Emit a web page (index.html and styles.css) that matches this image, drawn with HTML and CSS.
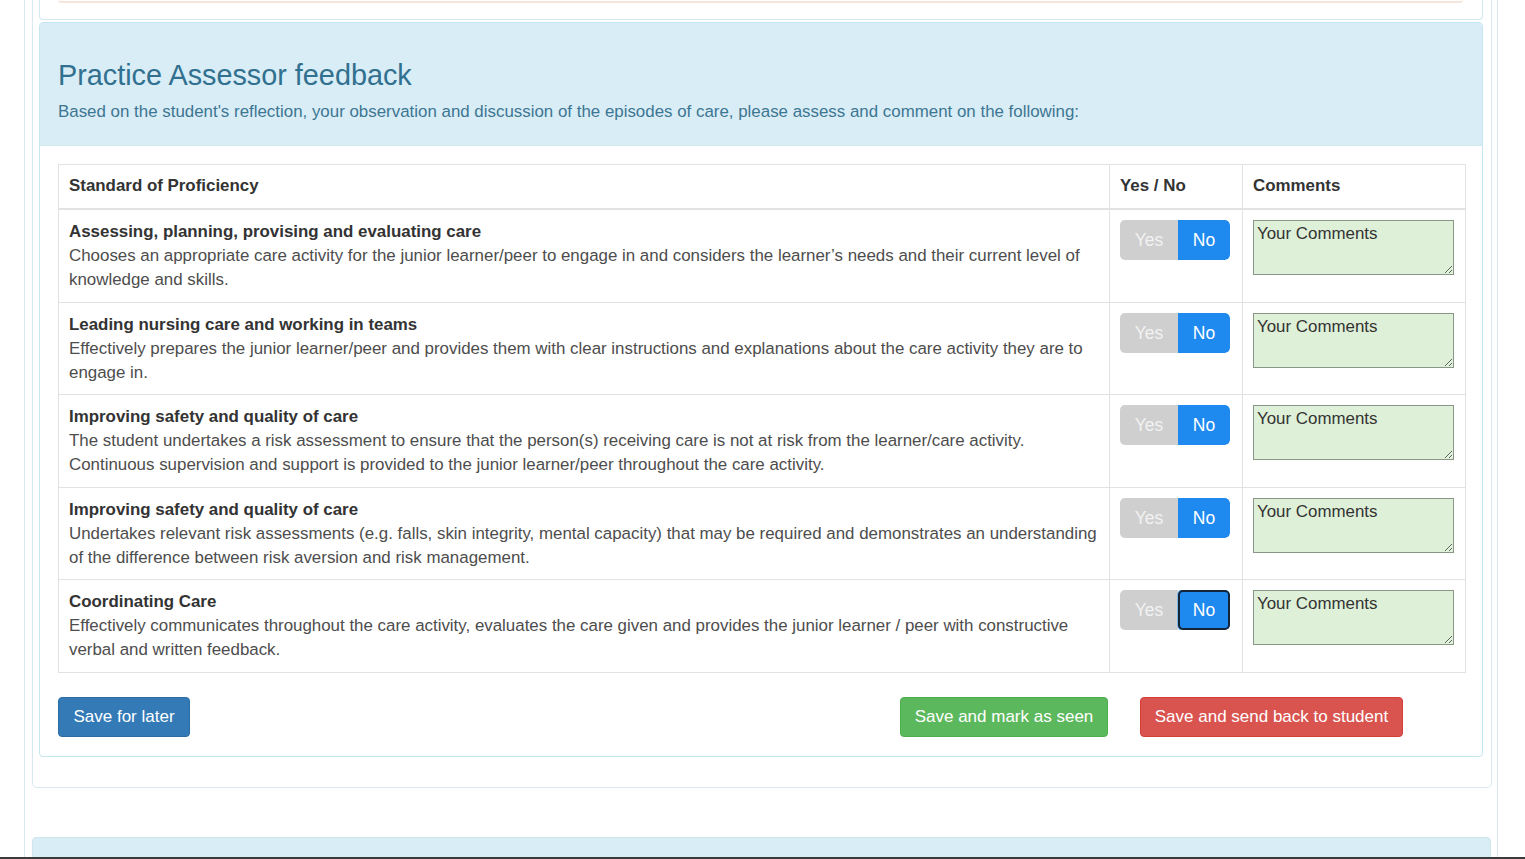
FILE: index.html
```html
<!DOCTYPE html>
<html lang="en">
<head>
<meta charset="utf-8">
<title>Practice Assessor feedback</title>
<link rel="stylesheet" href="styles.css">
</head>
<body>
<div class="page">
  <div class="outer">
    <div class="prev-panel"><div class="prev-line"></div></div>
    <div class="panel">
      <div class="panel-heading">
        <h3 class="title">Practice Assessor feedback</h3>
        <p class="subtitle">Based on the student's reflection, your observation and discussion of the episodes of care, please assess and comment on the following:</p>
      </div>
      <div class="panel-body">
        <table class="grid">
          <colgroup><col class="c1"><col class="c2"><col class="c3"></colgroup>
          <thead>
            <tr><th>Standard of Proficiency</th><th>Yes / No</th><th>Comments</th></tr>
          </thead>
          <tbody>
            <tr>
              <td><div class="item-title">Assessing, planning, provising and evaluating care</div><div class="item-desc">Chooses an appropriate care activity for the junior learner/peer to engage in and considers the learner’s needs and their current level of knowledge and skills.</div></td>
              <td><div class="toggle"><span class="yes">Yes</span><span class="no">No</span></div></td>
              <td><textarea class="comment">Your Comments</textarea></td>
            </tr>
            <tr>
              <td><div class="item-title">Leading nursing care and working in teams</div><div class="item-desc">Effectively prepares the junior learner/peer and provides them with clear instructions and explanations about the care activity they are to engage in.</div></td>
              <td><div class="toggle"><span class="yes">Yes</span><span class="no">No</span></div></td>
              <td><textarea class="comment">Your Comments</textarea></td>
            </tr>
            <tr>
              <td><div class="item-title">Improving safety and quality of care</div><div class="item-desc">The student undertakes a risk assessment to ensure that the person(s) receiving care is not at risk from the learner/care activity. Continuous supervision and support is provided to the junior learner/peer throughout the care activity.</div></td>
              <td><div class="toggle"><span class="yes">Yes</span><span class="no">No</span></div></td>
              <td><textarea class="comment">Your Comments</textarea></td>
            </tr>
            <tr>
              <td><div class="item-title">Improving safety and quality of care</div><div class="item-desc">Undertakes relevant risk assessments (e.g. falls, skin integrity, mental capacity) that may be required and demonstrates an understanding of the difference between risk aversion and risk management.</div></td>
              <td><div class="toggle"><span class="yes">Yes</span><span class="no">No</span></div></td>
              <td><textarea class="comment">Your Comments</textarea></td>
            </tr>
            <tr>
              <td><div class="item-title">Coordinating Care</div><div class="item-desc">Effectively communicates throughout the care activity, evaluates the care given and provides the junior learner / peer with constructive verbal and written feedback.</div></td>
              <td><div class="toggle"><span class="yes">Yes</span><span class="no focused">No</span></div></td>
              <td><textarea class="comment">Your Comments</textarea></td>
            </tr>
          </tbody>
        </table>
        <div class="actions">
          <button class="btn btn-primary">Save for later</button>
          <div class="actions-right">
            <button class="btn btn-success">Save and mark as seen</button>
            <button class="btn btn-danger">Save and send back to student</button>
          </div>
        </div>
      </div>
    </div>
  </div>
  <div class="next-panel"></div>
</div>
<div class="frame-bottom"></div>
</body>
</html>
```
FILE: styles.css
```css
* { box-sizing: border-box; }
html, body { margin: 0; padding: 0; }
body {
  font-family: "Liberation Sans", Arial, sans-serif;
  font-size: 16.9px;
  line-height: 24px;
  color: #333;
  background: #fff;
  overflow: hidden;
}
.page {
  margin-left: 24px;
  width: 1474px;
  height: 859px;
  border-left: 1px solid #d8eaf1;
  border-right: 1px solid #d8eaf1;
  padding: 0 5px 0 7px;
  overflow: hidden;
}
.outer {
  border: 1px solid #d8eaf1;
  border-top: none;
  border-radius: 0 0 5px 5px;
  padding: 0 8px 30px 6px;
}
.prev-panel {
  height: 20px;
  border: 1px solid #d3e8ef;
  border-top: none;
  border-radius: 0 0 4px 4px;
  padding: 0 19px 0 18px;
}
.prev-line {
  height: 3px;
  border-bottom: 2px solid #f6e5da;
  border-radius: 0 0 3px 3px;
}
.panel {
  margin-top: 2px;
  border: 1px solid #c4e6f0;
  border-radius: 4px;
}
.panel-heading {
  background: #d9edf7;
  color: #31708f;
  padding: 15px 18px 21px;
  border-radius: 3px 3px 0 0;
  border-bottom: 1px solid #d3e8ef;
}
.title {
  margin: 22px 0 10px;
  font-size: 28.8px;
  line-height: 30px;
  font-weight: 400;
}
.subtitle {
  margin: 0;
  font-size: 16.9px;
  line-height: 24px;
  color: #3d7692;
}
.panel-body {
  padding: 18px 17px 19px 18px;
}
.grid {
  width: 1407px;
  table-layout: fixed;
  border-collapse: collapse;
  border: 1px solid #e2e2e2;
}
.c1 { width: 1051px; }
.c2 { width: 133px; }
.c3 { width: 223px; }
.grid th {
  text-align: left;
  font-weight: 700;
  padding: 9px 10px 10px;
  border-bottom: 2px solid #e2e2e2;
  border-left: 1px solid #e2e2e2;
}
.grid td {
  vertical-align: top;
  padding: 10px 10px 9.5px;
  border-top: 1px solid #e2e2e2;
  border-left: 1px solid #e2e2e2;
}
.item-title { font-weight: 700; color: #333; }
.item-desc { color: #4d4d4d; }
.toggle {
  display: flex;
  width: 110px;
  height: 40px;
  border-radius: 5px;
  overflow: hidden;
  font-size: 17.5px;
}
.toggle span {
  display: flex;
  align-items: center;
  justify-content: center;
}
.yes { width: 58px; background: #cfcfcf; color: #f2f2f2; }
.no { width: 52px; background: #1e8af0; color: #fff; border-radius: 0 5px 5px 0; }
.no.focused {
  box-shadow: inset 0 0 0 2px #14253a, 0 0 0 1px #7fb6e8;
  border-radius: 5px;
}
.comment {
  display: block;
  margin: 0;
  width: 201px;
  height: 55px;
  border: 1px solid #8a9786;
  background: #dff0d8;
  color: #333;
  font-family: "Liberation Sans", Arial, sans-serif;
  font-size: 16.9px;
  line-height: 20px;
  padding: 3px 3px;
}
.actions {
  display: flex;
  align-items: center;
  margin-top: 24px;
}
.actions-right {
  display: flex;
  gap: 32px;
  margin-left: auto;
  margin-right: 62px;
}
.btn {
  height: 40px;
  border-radius: 4px;
  border: 1px solid transparent;
  color: #fff;
  font-family: "Liberation Sans", Arial, sans-serif;
  font-size: 17px;
  padding: 0;
  text-align: center;
}
.btn-primary { width: 132px; background: #337ab7; border-color: #2e6da4; }
.btn-success { width: 208px; background: #5cb85c; border-color: #4cae4c; }
.btn-danger { width: 263px; background: #d9534f; border-color: #d43f3a; }
.next-panel {
  margin-top: 49px;
  width: 1459px;
  height: 60px;
  background: #d9edf7;
  border: 1px solid #cfe6ee;
  border-radius: 4px 4px 0 0;
}
.frame-bottom {
  position: fixed;
  left: 0;
  right: 0;
  bottom: 0;
  height: 2px;
  background: #3a3a3a;
}
```
